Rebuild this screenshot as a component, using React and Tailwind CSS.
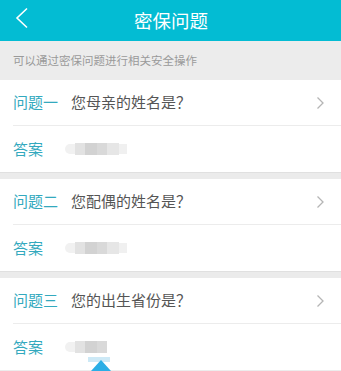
import React from 'react';

const questions = [
  { label: '问题一', text: '您母亲的姓名是？', mask: 'a' },
  { label: '问题二', text: '您配偶的姓名是？', mask: 'b' },
  { label: '问题三', text: '您的出生省份是？', mask: 'c' },
];

const font = { fontFamily: '"Noto Sans CJK SC", "Noto Sans", sans-serif' };

// pixelated blur that hides the answer
const MaskedAnswer = ({ variant }) => (
  <div className="relative flex items-center h-[12px] ml-[22px]">
    <div className="w-[10px] h-[10px] bg-[#f1f1f1] rounded-l-full" />
    <div className="w-[10px] h-[12px] bg-[#e2e2e2]" />
    <div className="w-[12px] h-[12px] bg-[#d2d2d2]" />
    <div className="w-[10px] h-[12px] bg-[#d9d9d9]" />
    {variant !== 'c' && <div className="w-[12px] h-[12px] bg-[#e6e6e6]" />}
    {variant !== 'c' && <div className="w-[8px] h-[10px] bg-[#f0f0f0]" />}
  </div>
);

const Chevron = () => (
  <svg width="9" height="14" viewBox="0 0 9 14" fill="none">
    <path d="M1.5 1.5 L7 7 L1.5 12.5" stroke="#b5b5b5" strokeWidth="1.3" />
  </svg>
);

const App = () => {
  return (
    <div className="w-[341px] h-[371px] overflow-hidden bg-[#ececec] relative" style={font}>
      {/* Header */}
      <div className="h-[41px] bg-[#03bcd3] flex items-center relative">
        <svg className="absolute left-[15px] top-[7px]" width="14" height="22" viewBox="0 0 14 22" fill="none">
          <path d="M12 1.5 L2 11 L12 20.5" stroke="#ffffff" strokeWidth="1.6" />
        </svg>
        <div className="flex-1 text-center text-white text-[18.5px] leading-none pl-[1px]">密保问题</div>
      </div>

      {/* Tip */}
      <div className="h-[39px] flex items-center px-[13px] text-[11.5px] text-[#9a9a9a]">
        可以通过密保问题进行相关安全操作
      </div>

      <div className="flex flex-col">
        {questions.map((q, i) => (
          <div key={q.label}>
            {i > 0 && <div className="h-[7px] bg-[#ebebeb] border-t border-[#e0e0e0]" />}
            <div className="bg-white pl-[13px]">
              <div className="h-[46px] flex items-center border-b border-[#ececec] pr-[16px]">
                <span className="text-[15px] text-[#33a9be] w-[58px]">{q.label}</span>
                <span className="flex-1 text-[15px] text-[#555555]">{q.text}</span>
                <Chevron />
              </div>
              <div className="h-[46px] flex items-center">
                <span className="text-[15px] text-[#33a9be]">答案</span>
                <MaskedAnswer variant={q.mask} />
              </div>
            </div>
          </div>
        ))}
      </div>

      {/* selection handle under the third answer */}
      <div className="absolute left-[88px] top-[357px] w-[22px] h-[5px] bg-[#cde9f6]" />
      <svg className="absolute left-[90px] top-[360px]" width="22" height="16" viewBox="0 0 22 16">
        <path d="M11 0 L21 11 A10 10 0 0 1 1 11 Z" fill="#2aaee6" />
      </svg>
    </div>
  );
};

export default App;
